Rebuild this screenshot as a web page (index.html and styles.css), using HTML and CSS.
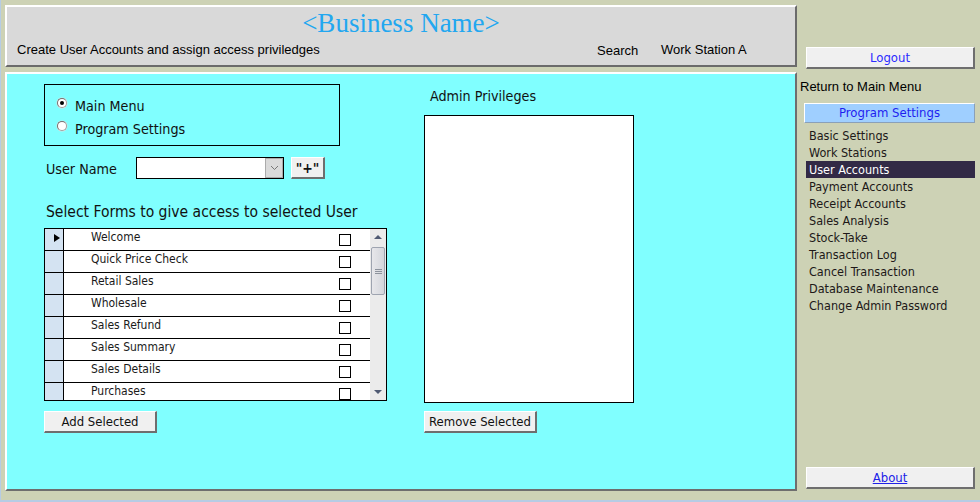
FILE: index.html
```html
<!DOCTYPE html>
<html>
<head>
<meta charset="utf-8">
<link rel="stylesheet" href="styles.css">
</head>
<body>
<div class="app">
  <div class="left">
    <header class="hdr">
      <div class="title">&lt;Business Name&gt;</div>
      <div class="sub">
        <span class="sub-title">Create User Accounts and assign access priviledges</span>
        <span class="search">Search</span>
        <span class="ws">Work Station A</span>
      </div>
    </header>
    <main class="panel">
      <div class="col1">
        <div class="radio-box">
          <div class="radio-row"><span class="radio checked"></span><span>Main Menu</span></div>
          <div class="radio-row"><span class="radio"></span><span>Program Settings</span></div>
        </div>
        <div class="user-row">
          <span class="user-label">User Name</span>
          <div class="combo">
            <span class="combo-btn"><svg width="9" height="6" viewBox="0 0 9 6"><path d="M1 1 L4.5 4.5 L8 1" fill="none" stroke="#777" stroke-width="1"/></svg></span>
          </div>
          <button class="btn plus">"+"</button>
        </div>
        <div class="forms-title">Select Forms to give access to selected User</div>
        <div class="grid">
          <div class="rows">
            <div class="row"><span class="sel"><span class="arrow"></span></span><span class="name">Welcome</span><span class="chk"></span></div>
            <div class="row"><span class="sel"></span><span class="name">Quick Price Check</span><span class="chk"></span></div>
            <div class="row"><span class="sel"></span><span class="name">Retail Sales</span><span class="chk"></span></div>
            <div class="row"><span class="sel"></span><span class="name">Wholesale</span><span class="chk"></span></div>
            <div class="row"><span class="sel"></span><span class="name">Sales Refund</span><span class="chk"></span></div>
            <div class="row"><span class="sel"></span><span class="name">Sales Summary</span><span class="chk"></span></div>
            <div class="row"><span class="sel"></span><span class="name">Sales Details</span><span class="chk"></span></div>
            <div class="row"><span class="sel"></span><span class="name">Purchases</span><span class="chk"></span></div>
          </div>
          <div class="scroll">
            <span class="up"></span>
            <span class="thumb"><span class="grip"></span></span>
            <span class="down"></span>
          </div>
        </div>
        <button class="btn action">Add Selected</button>
      </div>
      <div class="col2">
        <div class="admin-label">Admin Privileges</div>
        <div class="listbox"></div>
        <button class="btn action">Remove Selected</button>
      </div>
    </main>
  </div>
  <aside class="side">
    <button class="btn side-btn logout">Logout</button>
    <div class="return">Return to Main Menu</div>
    <div class="prog">Program Settings</div>
    <ul class="menu">
      <li>Basic Settings</li>
      <li>Work Stations</li>
      <li class="active">User Accounts</li>
      <li>Payment Accounts</li>
      <li>Receipt Accounts</li>
      <li>Sales Analysis</li>
      <li>Stock-Take</li>
      <li>Transaction Log</li>
      <li>Cancel Transaction</li>
      <li>Database Maintenance</li>
      <li>Change Admin Password</li>
    </ul>
    <button class="btn side-btn about">About</button>
  </aside>
</div>
</body>
</html>
```
FILE: styles.css
```css
html, body {
  margin: 0;
  padding: 0;
}
body {
  background: #CDD2B5;
  font-family: "DejaVu Sans Condensed", "DejaVu Sans", sans-serif;
  font-stretch: condensed;
  color: #111;
}
.app {
  display: flex;
  width: 980px;
  height: 502px;
  box-sizing: border-box;
  border-left: 1px solid #B6CCE4;
  border-bottom: 2px solid #B6CCE4;
  padding-left: 4px;
}
.left {
  width: 792px;
  padding-top: 5px;
  display: flex;
  flex-direction: column;
  gap: 5px;
}
.hdr {
  height: 62px;
  box-sizing: border-box;
  background: #D9D9D9;
  border-top: 2px solid #fff;
  border-left: 2px solid #fff;
  border-right: 2px solid #6B6B6B;
  border-bottom: 2px solid #6B6B6B;
}
.title {
  font-family: "Liberation Serif", serif;
  font-size: 27px;
  line-height: 30px;
  padding-top: 1px;
  text-align: center;
  color: #22A7F0;
}
.sub {
  display: flex;
  margin-top: 4px;
  padding-left: 10px;
  font-family: "Liberation Sans", Arial, sans-serif;
  font-size: 13px;
  line-height: 16px;
  color: #000;
}
.sub-title { width: 580px; }
.search { width: 64px; padding-top: 1px; }
.panel {
  height: 419px;
  box-sizing: border-box;
  background: #80FFFF;
  border-top: 2px solid #fff;
  border-left: 2px solid #fff;
  border-right: 2px solid #6E6E6E;
  border-bottom: 2px solid #6E6E6E;
  display: flex;
  padding: 10px 0 0 37px;
}
.col1 {
  width: 343px;
  display: flex;
  flex-direction: column;
  align-items: flex-start;
}
.radio-box {
  width: 296px;
  height: 62px;
  box-sizing: border-box;
  border: 1px solid #000;
  padding: 9px 0 0 12px;
  font-size: 14.2px;
}
.radio-row {
  display: flex;
  align-items: center;
  height: 23px;
  gap: 8px;
}
.radio {
  width: 10px;
  height: 10px;
  box-sizing: border-box;
  border-radius: 50%;
  background: #fff;
  border: 1px solid #A0A0A0;
  border-top-color: #707070;
  border-left-color: #707070;
  box-shadow: 0 0 0 0.5px #E0E0E0;
  margin-bottom: 6px;
  position: relative;
}
.radio.checked::after {
  content: "";
  position: absolute;
  left: 2px;
  top: 2px;
  width: 4px;
  height: 4px;
  border-radius: 50%;
  background: #000;
}
.user-row {
  display: flex;
  align-items: center;
  margin-top: 11px;
  height: 22px;
}
.user-label {
  width: 90px;
  margin-left: 2px;
  font-size: 14.2px;
  padding-top: 1px;
}
.combo {
  width: 148px;
  height: 22px;
  box-sizing: border-box;
  border: 1px solid #000;
  background: #fff;
  display: flex;
  justify-content: flex-end;
}
.combo-btn {
  width: 18px;
  height: 20px;
  box-sizing: border-box;
  background: #DADADA;
  border: 1px solid #ABABAB;
  display: flex;
  align-items: center;
  justify-content: center;
}
.btn {
  font-family: "DejaVu Sans Condensed", "DejaVu Sans", sans-serif;
  font-stretch: condensed;
  background: #F0F0F0;
  border-style: solid;
  border-width: 1px 2px 2px 1px;
  border-color: #FFFFFF #6E6E6E #6E6E6E #FFFFFF;
  box-sizing: border-box;
  padding: 0;
  color: #111;
  cursor: default;
}
.plus {
  margin-left: 7px;
  width: 34px;
  height: 22px;
  font-size: 14px;
  font-weight: bold;
}
.forms-title {
  margin-top: 23px;
  margin-left: 2px;
  font-size: 15.5px;
  line-height: 20px;
}
.grid {
  margin-top: 6px;
  width: 343px;
  height: 173px;
  box-sizing: border-box;
  border: 1px solid #000;
  background: #fff;
  display: flex;
  overflow: hidden;
}
.rows {
  width: 325px;
  height: 171px;
  overflow: hidden;
}
.row {
  display: flex;
  height: 22px;
  box-sizing: border-box;
  border-bottom: 1px solid #000;
}
.sel {
  width: 19px;
  flex: none;
  box-sizing: border-box;
  background: #D4E3F2;
  border-right: 1px solid #000;
  position: relative;
}
.arrow {
  position: absolute;
  left: 9px;
  top: 5px;
  width: 0;
  height: 0;
  border-top: 4.5px solid transparent;
  border-bottom: 4.5px solid transparent;
  border-left: 6px solid #000;
}
.name {
  flex: 1;
  padding: 0 0 0 27px;
  font-size: 12px;
  line-height: 16px;
  color: #1a1a1a;
}
.chk {
  width: 12px;
  height: 12px;
  box-sizing: border-box;
  border: 1px solid #000;
  background: #fff;
  margin: 5px 19px 0 0;
}
.scroll {
  width: 16px;
  height: 171px;
  background: #EBEBEB;
  display: flex;
  flex-direction: column;
  align-items: center;
  position: relative;
}
.up {
  margin-top: 6px;
  width: 0;
  height: 0;
  border-left: 4px solid transparent;
  border-right: 4px solid transparent;
  border-bottom: 4px solid #4F5A73;
}
.thumb {
  margin-top: 8px;
  width: 14px;
  height: 48px;
  box-sizing: border-box;
  border: 1px solid #9EA4B0;
  border-radius: 2px;
  background: linear-gradient(to right, #E7E7EA, #D4D6DC);
  display: flex;
  align-items: center;
  justify-content: center;
}
.grip {
  width: 7px;
  height: 5px;
  background: repeating-linear-gradient(to bottom, #8C929C 0 1px, transparent 1px 2px);
}
.down {
  position: absolute;
  bottom: 6px;
  left: 4px;
  width: 0;
  height: 0;
  border-left: 4px solid transparent;
  border-right: 4px solid transparent;
  border-top: 4px solid #4F5A73;
}
.action {
  margin-top: 10px;
  width: 113px;
  height: 22px;
  font-size: 13px;
}
.col2 {
  margin-left: 37px;
  padding-top: 2px;
  display: flex;
  flex-direction: column;
  align-items: flex-start;
}
.admin-label {
  margin-left: 6px;
  font-size: 14.2px;
  line-height: 20px;
}
.listbox {
  margin-top: 9px;
  width: 210px;
  height: 288px;
  box-sizing: border-box;
  border: 1px solid #000;
  background: #fff;
}
.col2 .action {
  margin-top: 8px;
}
.side {
  width: 180px;
  margin-left: 3px;
  display: flex;
  flex-direction: column;
  padding-top: 47px;
  padding-bottom: 11px;
  box-sizing: border-box;
}
.side-btn {
  margin-left: 6px;
  width: 169px;
  height: 22px;
  font-size: 13px;
  color: #2B2BFF;
}
.return {
  margin-top: 10px;
  font-family: "Liberation Sans", Arial, sans-serif;
  font-size: 13px;
  line-height: 16px;
  color: #000;
}
.prog {
  margin-top: 8px;
  margin-left: 4px;
  width: 171px;
  height: 20px;
  box-sizing: border-box;
  background: #9FCFFF;
  border: 1px solid #fff;
  border-right-color: #8AA0B8;
  border-bottom-color: #8AA0B8;
  text-align: center;
  font-size: 13px;
  line-height: 18px;
  color: #1E1EF0;
}
.menu {
  list-style: none;
  margin: 4px 0 0 6px;
  padding: 0;
  width: 169px;
}
.menu li {
  height: 17px;
  line-height: 17px;
  padding-left: 3px;
  font-size: 12.5px;
  color: #201818;
}
.menu li.active {
  background: #322A46;
  color: #fff;
}
.about {
  margin-top: auto;
  text-decoration: underline;
  color: #2020E8;
}
```
